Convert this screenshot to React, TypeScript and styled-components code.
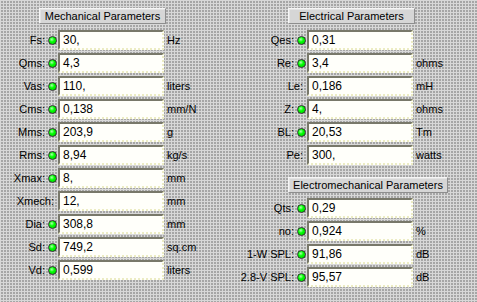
import styled, { createGlobalStyle } from "styled-components";

type Param = {
  label: string;
  value: string;
  unit?: string;
  led?: boolean;
};

const mechanical: Param[] = [
  { label: "Fs:", value: "30,", unit: "Hz", led: true },
  { label: "Qms:", value: "4,3", led: true },
  { label: "Vas:", value: "110,", unit: "liters", led: true },
  { label: "Cms:", value: "0,138", unit: "mm/N", led: true },
  { label: "Mms:", value: "203,9", unit: "g", led: true },
  { label: "Rms:", value: "8,94", unit: "kg/s", led: true },
  { label: "Xmax:", value: "8,", unit: "mm", led: true },
  { label: "Xmech:", value: "12,", unit: "mm" },
  { label: "Dia:", value: "308,8", unit: "mm", led: true },
  { label: "Sd:", value: "749,2", unit: "sq.cm", led: true },
  { label: "Vd:", value: "0,599", unit: "liters", led: true },
];

const electrical: Param[] = [
  { label: "Qes:", value: "0,31", led: true },
  { label: "Re:", value: "3,4", unit: "ohms", led: true },
  { label: "Le:", value: "0,186", unit: "mH" },
  { label: "Z:", value: "4,", unit: "ohms", led: true },
  { label: "BL:", value: "20,53", unit: "Tm", led: true },
  { label: "Pe:", value: "300,", unit: "watts" },
];

const electromechanical: Param[] = [
  { label: "Qts:", value: "0,29", led: true },
  { label: "no:", value: "0,924", unit: "%", led: true },
  { label: "1-W SPL:", value: "91,86", unit: "dB", led: true },
  { label: "2.8-V SPL:", value: "95,57", unit: "dB", led: true },
];

const GlobalStyle = createGlobalStyle`
  body {
    margin: 0;
    font-family: "Liberation Sans", Arial, sans-serif;
    font-size: 11px;
    color: #000;
    background-color: #a6a6a6;
    background-image:
      linear-gradient(#d8d8d8 1px, transparent 1px),
      linear-gradient(90deg, #d8d8d8 1px, transparent 1px);
    background-size: 3px 3px;
  }
`;

const Page = styled.div`
  display: grid;
  grid-template-columns: 240px 237px;
  width: 477px;
  height: 302px;
  overflow: hidden;
`;

const Column = styled.div<{ $headerLeft: number }>`
  display: flex;
  flex-direction: column;
  padding-top: 8px;
  --header-left: ${(p) => p.$headerLeft}px;
`;

const Header = styled.div<{ $width: number; $gap?: number }>`
  box-sizing: border-box;
  width: ${(p) => p.$width}px;
  height: 16px;
  margin-left: var(--header-left);
  margin-top: ${(p) => p.$gap ?? 0}px;
  margin-bottom: 3px;
  display: flex;
  align-items: center;
  justify-content: center;
  background: #d6d6d6;
  border-top: 1px solid #f6f6f6;
  border-left: 1px solid #f6f6f6;
  border-right: 1px solid #8e8e8e;
  border-bottom: 1px solid #8e8e8e;
  box-shadow: inset 1px 1px 0 #e4e4e4;
  white-space: nowrap;
`;

const Row = styled.div<{ $gap?: number }>`
  display: flex;
  align-items: center;
  height: 20px;
  margin-top: ${(p) => p.$gap ?? 3}px;
`;

const LabelCell = styled.div<{ $width: number }>`
  width: ${(p) => p.$width}px;
  display: flex;
  align-items: center;
  justify-content: flex-end;
  white-space: nowrap;
`;

const Label = styled.span<{ $led?: boolean }>`
  padding-right: ${(p) => (p.$led ? 3 : 4)}px;
`;

const Led = styled.span`
  box-sizing: border-box;
  width: 9px;
  height: 9px;
  margin-right: 1px;
  border-radius: 50%;
  border: 1px solid #303030;
  background: radial-gradient(circle at 40% 35%, #b0ffb0 0, #00ff00 40%, #00d000 100%);
`;

const Field = styled.div`
  box-sizing: border-box;
  width: 106px;
  height: 20px;
  padding-left: 3px;
  display: flex;
  align-items: center;
  background: #fffffa;
  border-top: 2px solid #78786a;
  border-left: 2px solid #78786a;
  border-right: 2px dotted #ececc4;
  border-bottom: 2px dotted #ececc4;
  font-size: 12px;
`;

const Unit = styled.span`
  margin-left: 3px;
  white-space: nowrap;
`;

const ParamRow = ({ p, labelWidth, gap }: { p: Param; labelWidth: number; gap?: number }) => (
  <Row $gap={gap}>
    <LabelCell $width={labelWidth}>
      <Label $led={p.led}>{p.label}</Label>
      {p.led && <Led />}
    </LabelCell>
    <Field>{p.value}</Field>
    {p.unit && <Unit>{p.unit}</Unit>}
  </Row>
);

export default function App() {
  return (
    <>
      <GlobalStyle />
      <Page>
        <Column $headerLeft={39}>
          <Header $width={127}>Mechanical Parameters</Header>
          {mechanical.map((p) => (
            <ParamRow key={p.label} p={p} labelWidth={58} />
          ))}
        </Column>
        <Column $headerLeft={48}>
          <Header $width={127}>Electrical Parameters</Header>
          {electrical.map((p) => (
            <ParamRow key={p.label} p={p} labelWidth={67} />
          ))}
          <Header $width={160} $gap={12}>
            Electromechanical Parameters
          </Header>
          {electromechanical.map((p, i) => (
            <ParamRow key={p.label} p={p} labelWidth={67} gap={i === 0 ? 2 : 3} />
          ))}
        </Column>
      </Page>
    </>
  );
}
